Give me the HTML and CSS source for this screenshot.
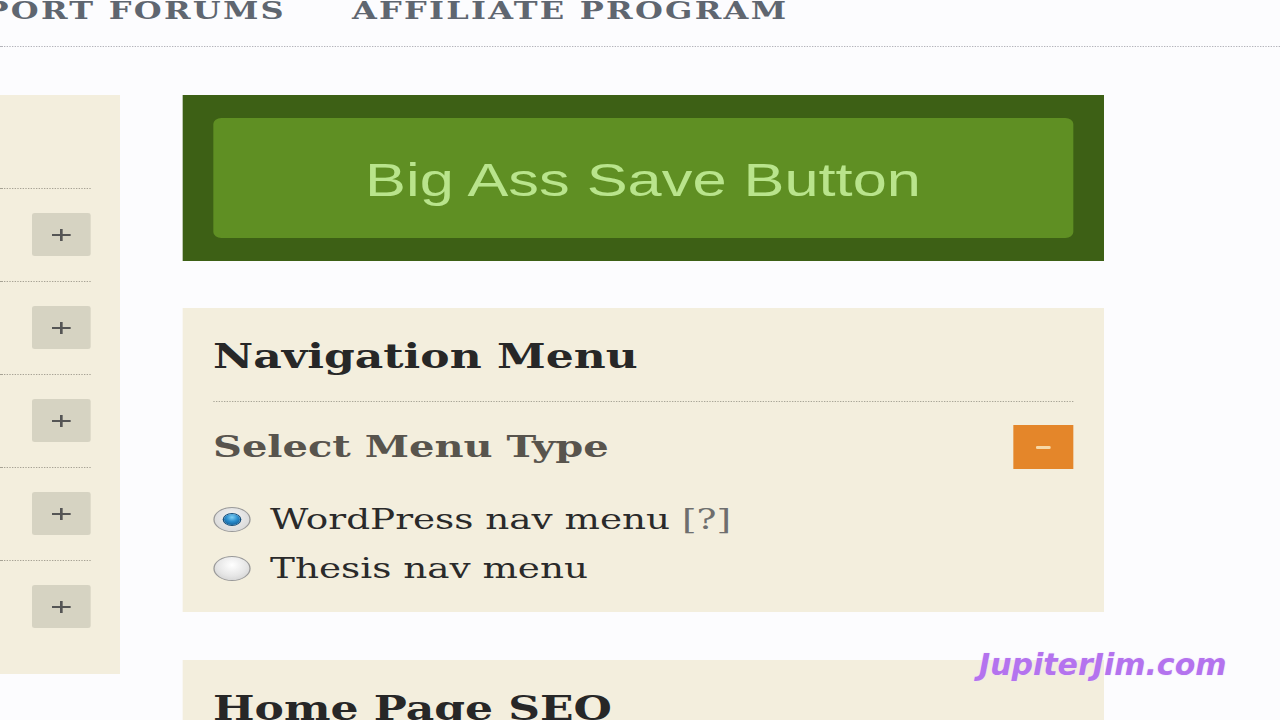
FILE: index.html
```html
<!DOCTYPE html>
<html lang="en">
<head>
<meta charset="utf-8">
<title>Thesis Options</title>
<link rel="stylesheet" href="styles.css">
</head>
<body>
<div class="stage">
  <nav class="topnav">
    <div class="nav-first"><span class="nav-link">Support Forums</span></div>
    <span class="nav-link">Affiliate Program</span>
  </nav>
  <div class="content">
    <aside class="sidebar">
      <div class="side-head"></div>
      <div class="side-row"><span class="plus-btn"><svg viewBox="0 0 16 16" width="16" height="16"><path d="M1 8H15M8 2V14" stroke="#555" stroke-width="2" fill="none"/></svg></span></div>
      <div class="side-row"><span class="plus-btn"><svg viewBox="0 0 16 16" width="16" height="16"><path d="M1 8H15M8 2V14" stroke="#555" stroke-width="2" fill="none"/></svg></span></div>
      <div class="side-row"><span class="plus-btn"><svg viewBox="0 0 16 16" width="16" height="16"><path d="M1 8H15M8 2V14" stroke="#555" stroke-width="2" fill="none"/></svg></span></div>
      <div class="side-row"><span class="plus-btn"><svg viewBox="0 0 16 16" width="16" height="16"><path d="M1 8H15M8 2V14" stroke="#555" stroke-width="2" fill="none"/></svg></span></div>
      <div class="side-row"><span class="plus-btn"><svg viewBox="0 0 16 16" width="16" height="16"><path d="M1 8H15M8 2V14" stroke="#555" stroke-width="2" fill="none"/></svg></span></div>
    </aside>
    <main class="main">
      <div class="save-box">
        <button class="save-btn">Big Ass Save Button</button>
      </div>
      <section class="panel">
        <h2 class="panel-title">Navigation Menu</h2>
        <div class="option-head">
          <h3 class="option-title">Select Menu Type</h3>
          <span class="toggle"><span class="toggle-dash"></span></span>
        </div>
        <ul class="radio-list">
          <li class="radio-item"><span class="radio checked"></span>WordPress nav menu <span class="help">[?]</span></li>
          <li class="radio-item"><span class="radio"></span>Thesis nav menu</li>
        </ul>
      </section>
      <section class="panel">
        <h2 class="panel-title plain">Home Page SEO</h2>
      </section>
    </main>
  </div>
</div>
<div class="watermark">JupiterJim.com</div>
</body>
</html>
```
FILE: styles.css
```css
html, body {
  margin: 0;
  padding: 0;
}
body {
  width: 1280px;
  height: 720px;
  overflow: hidden;
  background: #fcfcfe;
  position: relative;
  font-family: "DejaVu Serif", "Liberation Serif", serif;
}
.stage {
  width: 960px;
  transform: scaleX(1.33333);
  transform-origin: 0 0;
}
.topnav {
  display: flex;
  align-items: flex-start;
  gap: 49.5px;
  height: 46px;
  border-bottom: 1px dotted #b3b3ba;
}
.nav-first {
  width: 214.5px;
  display: flex;
  justify-content: flex-end;
  flex-shrink: 0;
}
.nav-link {
  white-space: nowrap;
  flex-shrink: 0;
  text-transform: uppercase;
  font-size: 24px;
  line-height: 24px;
  font-weight: bold;
  letter-spacing: 1.7px;
  color: #5f6670;
  margin-top: -1px;
}
.content {
  display: flex;
  align-items: flex-start;
  padding-top: 48px;
}
.sidebar {
  width: 90px;
  box-sizing: border-box;
  padding: 0 22.5px 21px 0;
  margin-right: 46.5px;
  background: #f3eedd;
  flex-shrink: 0;
}
.side-head {
  height: 93px;
}
.side-row {
  border-top: 1px dotted #a6a294;
  padding: 24px 0 25px;
  display: flex;
  justify-content: flex-end;
}
.plus-btn {
  width: 43.5px;
  height: 43px;
  background: #d6d3c2;
  border-radius: 2px;
  display: flex;
  align-items: center;
  justify-content: center;
}
.main {
  width: 691.5px;
  flex-shrink: 0;
}
.save-box {
  background: #3d6015;
  padding: 23px 23.25px;
}
.save-btn {
  display: block;
  width: 100%;
  height: 120px;
  border: none;
  border-radius: 6px;
  background: #5f8f23;
  color: #b9e48c;
  font-family: "Liberation Sans", Arial, sans-serif;
  font-size: 46px;
  padding: 4px 0 0;
}
.panel {
  margin-top: 47px;
  background: #f3eedd;
  padding: 29px 23.25px 19px;
}
.panel + .panel {
  margin-top: 48px;
}
.panel-title {
  margin: 0;
  font-size: 33px;
  line-height: 40px;
  font-weight: bold;
  color: #272727;
  padding-bottom: 24px;
  border-bottom: 1px dotted #a8a597;
}
.panel-title.plain {
  border-bottom: none;
}
.option-head {
  margin-top: 23px;
  height: 44px;
  display: flex;
  align-items: center;
  justify-content: space-between;
}
.option-title {
  margin: 0;
  font-size: 30px;
  line-height: 44px;
  font-weight: bold;
  color: #58544d;
}
.toggle {
  width: 44.5px;
  height: 44px;
  background: #e4862a;
  display: flex;
  align-items: center;
  justify-content: center;
}
.toggle-dash {
  width: 10.5px;
  height: 3px;
  background: #f7d8a6;
  border-radius: 1px;
}
.radio-list {
  list-style: none;
  margin: 26px 0 0;
  padding: 0;
}
.radio-item {
  height: 49px;
  line-height: 49px;
  font-size: 28px;
  color: #2a2a2a;
  display: flex;
  align-items: center;
  white-space: pre;
}
.help {
  color: #6e6e6e;
}
.radio {
  width: 28px;
  height: 25px;
  box-sizing: border-box;
  border-radius: 50%;
  border: 1.5px solid #9a9a9a;
  background: radial-gradient(circle at 50% 35%, #ffffff 0%, #e6e6e6 55%, #c8c8c8 100%);
  margin-right: 14.75px;
  flex-shrink: 0;
  display: flex;
  align-items: center;
  justify-content: center;
}
.radio.checked {
  background: radial-gradient(circle at 50% 40%, #f4f4f4 0%, #dcdcdc 70%, #bdbdbd 100%);
}
.radio.checked::after {
  content: "";
  width: 12px;
  height: 11px;
  border-radius: 50%;
  background: radial-gradient(circle at 50% 30%, #7fd0f5 0%, #2a8ccc 45%, #0b4f86 100%);
  box-shadow: 0 0 0 1px #164d78;
}
.watermark {
  position: absolute;
  left: 979px;
  top: 650px;
  font-family: "DejaVu Sans", Verdana, sans-serif;
  font-weight: bold;
  font-style: italic;
  font-size: 30px;
  line-height: 30px;
  color: #b473ee;
  text-shadow: 0 0 2px #eedcfc;
}
```
